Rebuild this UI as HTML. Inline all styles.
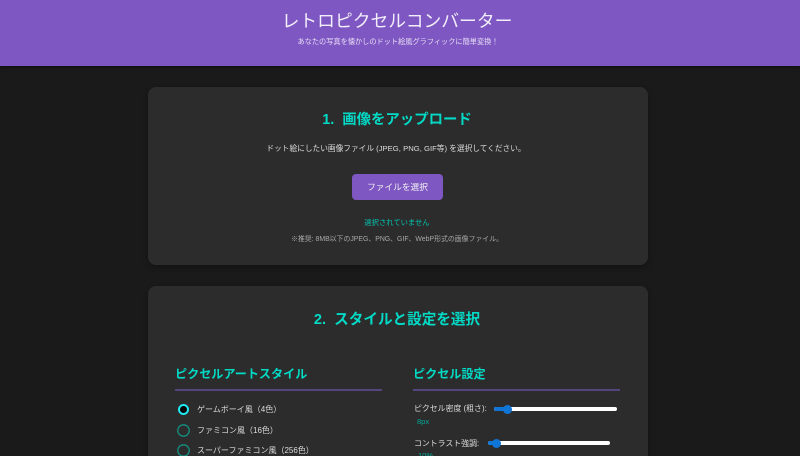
<!DOCTYPE html>
<html lang="ja">
<head>
<meta charset="utf-8">
<title>レトロピクセルコンバーター</title>
<style>
html,body{margin:0;padding:0;width:800px;height:456px;overflow:hidden;background:#1a1a1a;}
body{position:relative;font-family:"Liberation Sans","Noto Sans CJK JP",sans-serif;color:#e0e0e0;}
#w{position:absolute;left:0;top:0;width:800px;height:456px;overflow:hidden;filter:blur(.3px);}
.a{position:absolute;white-space:nowrap;line-height:1;}
.c{left:0;width:800px;text-align:center;}
.header{position:absolute;left:0;top:0;width:800px;height:66px;background:#7e57c2;box-shadow:0 1px 3px rgba(0,0,0,.5);}
.card{position:absolute;left:148px;width:500px;background:#2c2c2c;border-radius:8px;box-shadow:0 2px 6px rgba(0,0,0,.3);}
.teal{color:#03dac6;}
.rule{position:absolute;height:2px;background:#54457f;}
svg.r{position:absolute;width:15px;height:15px;}
.track{position:absolute;height:4px;background:#fff;border-radius:2px;}
.fill{position:absolute;height:4px;background:#0f76d8;border-radius:2px;}
.thumb{position:absolute;width:9px;height:9px;border-radius:50%;background:#0f76d8;}
</style>
</head>
<body>
<div id="w">
<div class="header"></div>
<div class="a c" style="top:13px;font-size:17.8px;color:#f2eefa;left:-3px;">レトロピクセルコンバーター</div>
<div class="a c" style="top:38px;font-size:7.2px;color:#e6dcf4;left:-2px;">あなたの写真を懐かしのドット絵風グラフィックに簡単変換！</div>

<div class="card" style="top:87px;height:178px;"></div>
<div class="a c teal" style="top:113px;font-size:14.4px;font-weight:700;left:-3px;">1.&nbsp; 画像をアップロード</div>
<div class="a c" style="top:145px;font-size:7.7px;color:#dcdcdc;left:-4px;">ドット絵にしたい画像ファイル (JPEG, PNG, GIF等) を選択してください。</div>
<div style="position:absolute;left:352px;top:174px;width:91px;height:26px;background:#7e57c2;border-radius:4px;"></div>
<div class="a" style="left:352px;width:91px;text-align:center;top:183px;font-size:8.7px;color:#f2f2f2;">ファイルを選択</div>
<div class="a c" style="top:219px;font-size:7.3px;color:#03c4b0;left:-3px;">選択されていません</div>
<div class="a c" style="top:237px;font-size:6.9px;color:#a8a8a8;left:-3px;">※推奨: 8MB以下のJPEG、PNG、GIF、WebP形式の画像ファイル。</div>

<div class="card" style="top:286px;height:190px;"></div>
<div class="a c teal" style="top:313px;font-size:14.6px;font-weight:700;left:-3px;">2.&nbsp; スタイルと設定を選択</div>

<div class="a teal" style="left:175px;top:368px;font-size:12.1px;font-weight:700;">ピクセルアートスタイル</div>
<div class="rule" style="left:175px;top:389px;width:207px;"></div>
<svg class="r" style="left:176px;top:402px;" viewBox="0 0 15 15"><circle cx="7.5" cy="7.5" r="4.5" fill="#000" stroke="#1fe8f0" stroke-width="2"/></svg>
<div class="a" style="left:197px;top:406px;font-size:8px;color:#dcdcdc;">ゲームボーイ風（4色）</div>
<svg class="r" style="left:176px;top:423px;" viewBox="0 0 15 15"><circle cx="7.5" cy="7.5" r="5.7" fill="none" stroke="#12907f" stroke-width="1.3"/></svg>
<div class="a" style="left:197px;top:427px;font-size:8px;color:#dcdcdc;">ファミコン風（16色）</div>
<svg class="r" style="left:176px;top:443px;" viewBox="0 0 15 15"><circle cx="7.5" cy="7.5" r="5.7" fill="none" stroke="#12907f" stroke-width="1.3"/></svg>
<div class="a" style="left:197px;top:447px;font-size:8px;color:#dcdcdc;">スーパーファミコン風（256色）</div>

<div class="a teal" style="left:413px;top:368px;font-size:12.1px;font-weight:700;">ピクセル設定</div>
<div class="rule" style="left:413px;top:389px;width:207px;"></div>
<div class="a" style="left:414px;top:405px;font-size:7.9px;color:#dcdcdc;">ピクセル密度 (粗さ):</div>
<div class="track" style="left:494px;top:407px;width:123px;"></div>
<div class="fill" style="left:494px;top:407px;width:14px;"></div>
<div class="thumb" style="left:503px;top:405px;"></div>
<div class="a" style="left:417px;top:418px;font-size:7.5px;color:#03a898;">8px</div>
<div class="a" style="left:414px;top:440px;font-size:7.9px;color:#dcdcdc;">コントラスト強調:</div>
<div class="track" style="left:488px;top:441px;width:122px;"></div>
<div class="fill" style="left:488px;top:441px;width:8px;"></div>
<div class="thumb" style="left:492px;top:439px;"></div>
<div class="a" style="left:418px;top:452px;font-size:7.5px;color:#03a898;">10%</div>
</div>
</body>
</html>
